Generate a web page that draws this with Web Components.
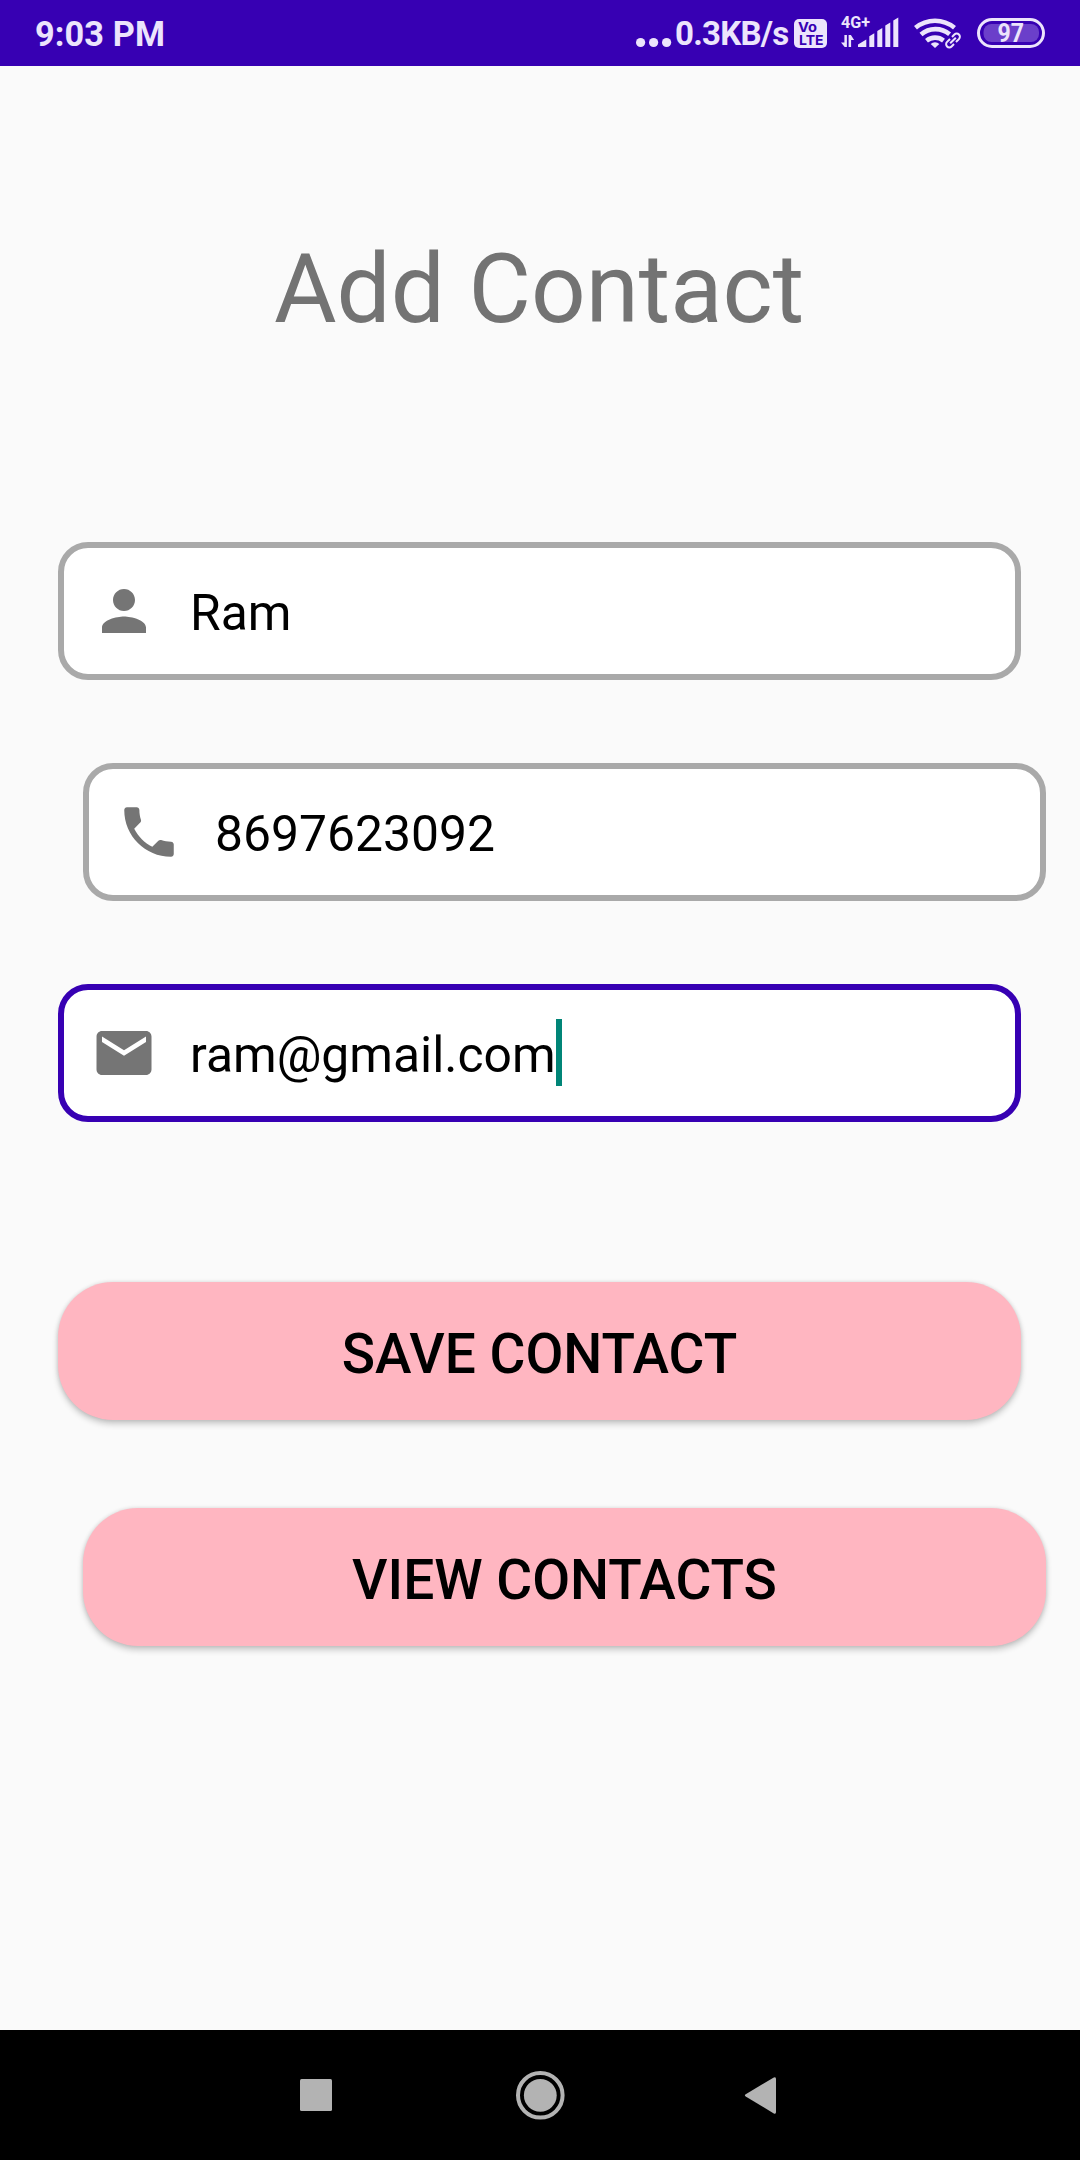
<!DOCTYPE html>
<html lang="en">
<head>
<meta charset="utf-8">
<title>Add Contact</title>
<style>
html,body{margin:0;padding:0}
body{width:1080px;height:2160px;overflow:hidden;font-family:Roboto,"Noto Sans",sans-serif;background:#fafafa}
</style>
</head>
<body>
<contact-screen></contact-screen>
<script>
const define = (name, html) => customElements.define(name, class extends HTMLElement {
  constructor() {
    super();
    const t = document.createElement('template');
    t.innerHTML = html;
    this.attachShadow({ mode: 'open' }).append(t.content.cloneNode(true));
  }
});

define('status-clock', `<style>:host{display:block;font-weight:700;font-size:34.3px;line-height:68px;letter-spacing:.1px;white-space:nowrap}</style><slot></slot>`);

define('status-dots', `<style>:host,svg{display:block}</style>
<svg width="37" height="66" fill="currentColor"><circle cx="5.6" cy="42.5" r="4.6"/><circle cx="18.6" cy="42.5" r="4.6"/><circle cx="31.6" cy="42.5" r="4.6" /></svg>`);

define('status-volte', `<style>:host,svg{display:block}text{font-family:Inter,sans-serif;font-weight:700;fill:#3700b3}</style>
<svg width="33" height="66"><rect y="19" width="33" height="29" rx="5" fill="currentColor"/>
<text x="4" y="32" font-size="13" textLength="19" lengthAdjust="spacingAndGlyphs">Vo</text>
<text x="5" y="44.6" font-size="13.5" textLength="24.5" lengthAdjust="spacingAndGlyphs">LTE</text></svg>`);

define('status-signal', `<style>:host,svg{display:block}</style>
<svg width="58" height="66" fill="currentColor">
<text x="0" y="28" font-size="17" font-weight="700" textLength="29" lengthAdjust="spacingAndGlyphs">4G+</text>
<path d="M5.9 35v12H3.7L0 42.4h3.400V35zM7.600 47V35h2.300l3.200 5h-3V47z"/>
<path d="M17 47v-2.6l8.3-5V47zM28.3 47V36.2l5-3V47zM36.3 47V31l5-3V47zM44.3 47V25.6l5-3V47zM52.3 47V20.4l5-3V47z"/></svg>`);

define('status-wifi', `<style>:host,svg{display:block}</style>
<svg width="48" height="66" fill="none" stroke="currentColor">
<path d="M1.5 27.8a30.5 30.5 0 0 1 39 0" stroke-width="4.6"/>
<path d="M7 34.6a22 22 0 0 1 28.6-.4" stroke-width="4.6"/>
<path d="M12.5 40.7a13.6 13.6 0 0 1 17-.1" stroke-width="4.6"/>
<path d="M21 48l-4.3-3.9a5.8 5.8 0 0 1 8.6 0z" fill="currentColor" stroke="none"/>
<g stroke-width="2" transform="translate(39 40.5) rotate(-45)"><path d="M-1-3.2h-4.2a3.2 3.2 0 0 0 0 6.4h3.4M1 3.2h4.2a3.2 3.2 0 0 0 0-6.4H1.8M-4 0h8"/></g></svg>`);

define('status-battery', `<style>:host,svg{display:block}</style>
<svg width="68" height="66"><rect x="1.5" y="19.5" width="65" height="27" rx="13.5" fill="none" stroke="currentColor" stroke-width="3"/>
<rect x="6.5" y="24" width="55.5" height="18" rx="8" fill="#6b3fca"/>
<text x="20.5" y="42" font-size="25.500" font-weight="700" fill="currentColor" textLength="26.5" lengthAdjust="spacingAndGlyphs">97</text></svg>`);

define('status-bar', `<style>
:host{display:flex;justify-content:space-between;height:66px;box-sizing:border-box;padding:0 35px;background:#3700b3;color:#ece4fc}
.right{display:flex}
.speed{font-weight:700;font-size:33px;line-height:67px;width:113px;margin-left:3px;white-space:nowrap;letter-spacing:-.75px}
status-volte{margin-left:6px}status-signal{margin-left:13.5px}status-wifi{margin-left:15.5px}status-battery{margin-left:15px}
</style>
<status-clock>9:03 PM</status-clock>
<div class="right"><status-dots></status-dots><span class="speed">0.3KB/s</span><status-volte></status-volte><status-signal></status-signal><status-wifi></status-wifi><status-battery></status-battery></div>`);

define('screen-title', `<style>:host{display:block;margin-right:2px;text-align:center;font-size:96px;line-height:112px;color:#737373}</style><slot></slot>`);

define('text-field', `<style>
:host{display:flex;align-items:center;width:963px;height:138px;box-sizing:border-box;padding:0 27px;gap:33px;border:6px solid #a9a9a9;border-radius:30px;background:#fff;color:#000}
:host([focused]){border-color:#3700b3}
:host([shifted]){margin-left:25px}
::slotted(svg){display:block;width:66px;height:66px;fill:#757575}
.value{display:flex;align-items:center;font-size:49.8px;line-height:66px}
.text{padding-top:4px}
.caret{display:none;width:6px;height:67px;margin-bottom:2px;background:#008577}
:host([focused]) .caret{display:block}
</style><slot name="icon"></slot><div class="value"><span class="text"><slot></slot></span><i class="caret"></i></div>`);

define('pill-button', `<style>
:host{display:flex;align-items:center;justify-content:center;width:963px;height:138px;box-sizing:border-box;padding-top:6px;border-radius:55px;background:#ffb6c1;color:#000;font-size:55px;font-weight:500;box-shadow:0 4px 6px rgba(0,0,0,.2),0 0 4px rgba(0,0,0,.12)}
:host([shifted]){margin-left:25px}
</style><slot></slot>`);

define('nav-bar', `<style>
:host{display:flex;justify-content:flex-start;align-items:center;height:130px;box-sizing:border-box;padding-left:299px;background:#000}
svg{display:block;fill:#b3b3b3}
.home{margin:0 179px 0 182px}
</style>
<svg width="34" height="50"><rect x="1" y="9" width="32" height="32" rx="1.5"/></svg>
<svg class="home" width="50" height="50"><circle cx="25.3" cy="25.3" r="22.3" fill="none" stroke="#b3b3b3" stroke-width="4"/><circle cx="25.3" cy="25.3" r="16.4"/></svg>
<svg width="34" height="50"><path d="M1.7 24.2 29.8 7.5Q32 6.5 32 9v33q0 2.5-2.2 1.4L1.7 26.5q-1.6-1.1 0-2.3z"/></svg>`);

define('contact-screen', `<style>
:host{display:flex;flex-direction:column;width:1080px;height:2160px;background:#fafafa}
main{flex:1;display:flex;flex-direction:column;padding-top:167px}
.fields,.actions{display:flex;flex-direction:column;padding-left:58px}
.fields{margin-top:197px;gap:83px}
.actions{margin-top:160px;gap:88px}
</style>
<status-bar></status-bar>
<main>
<screen-title>Add Contact</screen-title>
<section class="fields">
<text-field><svg slot="icon" viewBox="0 0 24 24"><path d="M12 12c2.21 0 4-1.79 4-4s-1.79-4-4-4-4 1.79-4 4 1.79 4 4 4zm0 2c-2.67 0-8 1.34-8 4v2h16v-2c0-2.66-5.33-4-8-4z"/></svg>Ram</text-field>
<text-field shifted><svg slot="icon" viewBox="0 0 24 24"><path d="M6.62 10.79c1.44 2.83 3.76 5.14 6.59 6.59l2.2-2.2c.27-.27.67-.36 1.02-.24 1.12.37 2.33.57 3.57.57.55 0 1 .45 1 1V20c0 .55-.45 1-1 1-9.39 0-17-7.61-17-17 0-.55.45-1 1-1h3.5c.55 0 1 .45 1 1 0 1.25.2 2.45.57 3.57.11.35.03.74-.25 1.02l-2.2 2.2z"/></svg>8697623092</text-field>
<text-field focused><svg slot="icon" viewBox="0 0 24 24"><path d="M20 4H4c-1.1 0-1.99.9-1.99 2L2 18c0 1.100.9 2 2 2h16c1.100 0 2-.9 2-2V6c0-1.100-.9-2-2-2zm0 4l-8 5-8-5V6l8 5 8-5v2z"/></svg>ram@gmail.com</text-field>
</section>
<section class="actions">
<pill-button>SAVE CONTACT</pill-button>
<pill-button shifted>VIEW CONTACTS</pill-button>
</section>
</main>
<nav-bar></nav-bar>`);
</script>
</body>
</html>
